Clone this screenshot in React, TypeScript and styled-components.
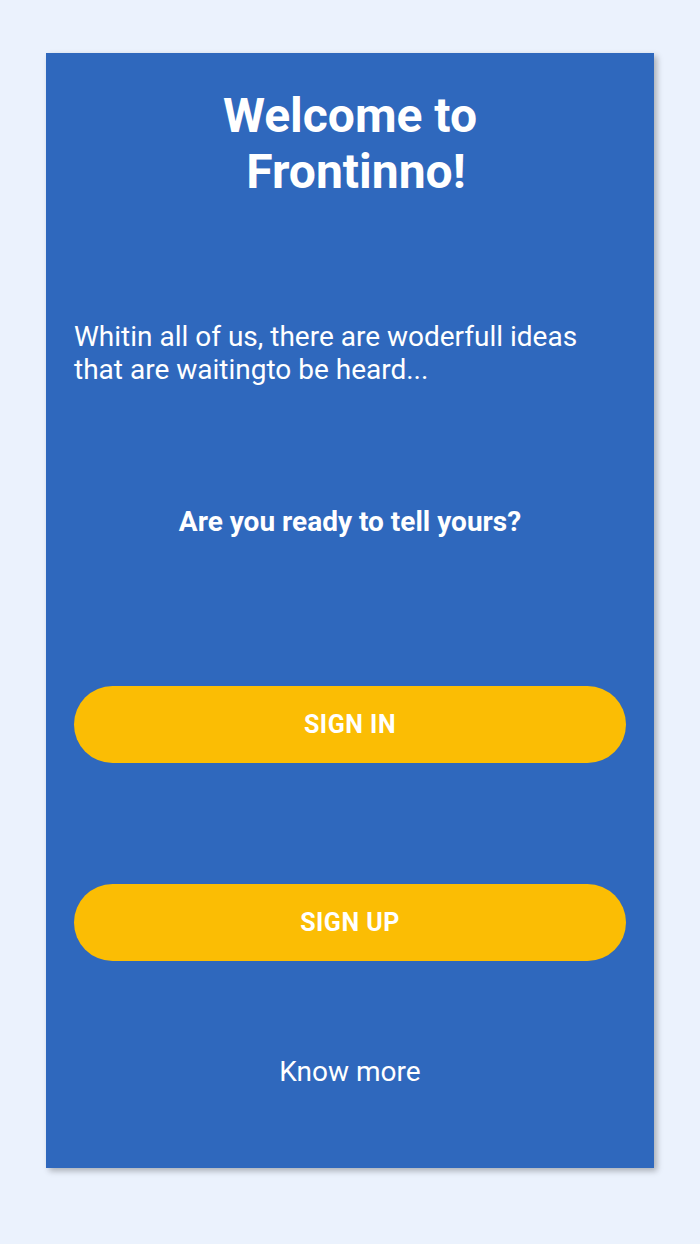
import styled, { createGlobalStyle } from 'styled-components';

const GlobalStyle = createGlobalStyle`
  html, body {
    margin: 0;
    padding: 0;
    background: #ebf2fd;
  }
  body {
    font-family: Roboto, 'Liberation Sans', Arial, sans-serif;
    -webkit-font-smoothing: antialiased;
  }
`;

const Page = styled.div`
  display: flex;
  justify-content: center;
  padding: 53px 0 76px;
`;

const Card = styled.main`
  width: 608px;
  height: 1115px;
  box-sizing: border-box;
  padding: 0 28px;
  display: flex;
  flex-direction: column;
  align-items: stretch;
  background: #2f68bd;
  color: #fff;
  box-shadow: 3px 3px 6px rgba(0, 0, 0, 0.28);
`;

const Title = styled.h1`
  margin: 35px auto 0;
  max-width: 300px;
  font-size: 48px;
  line-height: 56px;
  font-weight: 700;
  text-align: center;
`;

const Intro = styled.p`
  margin: 120px 0 0;
  font-size: 28px;
  font-weight: 400;
`;

const Question = styled.h2`
  margin: 119px 0 0;
  font-size: 28px;
  font-weight: 700;
  text-align: center;
`;

const Button = styled.button<{ $gap: number }>`
  margin-top: ${(p) => p.$gap}px;
  height: 77px;
  border: none;
  border-radius: 39px;
  background: #fbbd04;
  color: #fff;
  font-family: inherit;
  font-size: 25px;
  font-weight: 700;
  letter-spacing: 0.5px;
  cursor: pointer;
`;

const MoreLink = styled.a`
  margin-top: 94px;
  align-self: center;
  font-size: 28px;
  color: #fff;
  text-decoration: none;
`;

export default function App() {
  return (
    <>
      <GlobalStyle />
      <Page>
        <Card>
          {/* nbsp keeps the second line nudged right like the original */}
          <Title>Welcome to {'\u00a0'}Frontinno!</Title>
          <Intro>
            Whitin all of us, there are woderfull ideas that are waitingto be
            heard...
          </Intro>
          <Question>Are you ready to tell yours?</Question>
          <Button $gap={148}>SIGN IN</Button>
          <Button $gap={121}>SIGN UP</Button>
          <MoreLink href="#">Know more</MoreLink>
        </Card>
      </Page>
    </>
  );
}
